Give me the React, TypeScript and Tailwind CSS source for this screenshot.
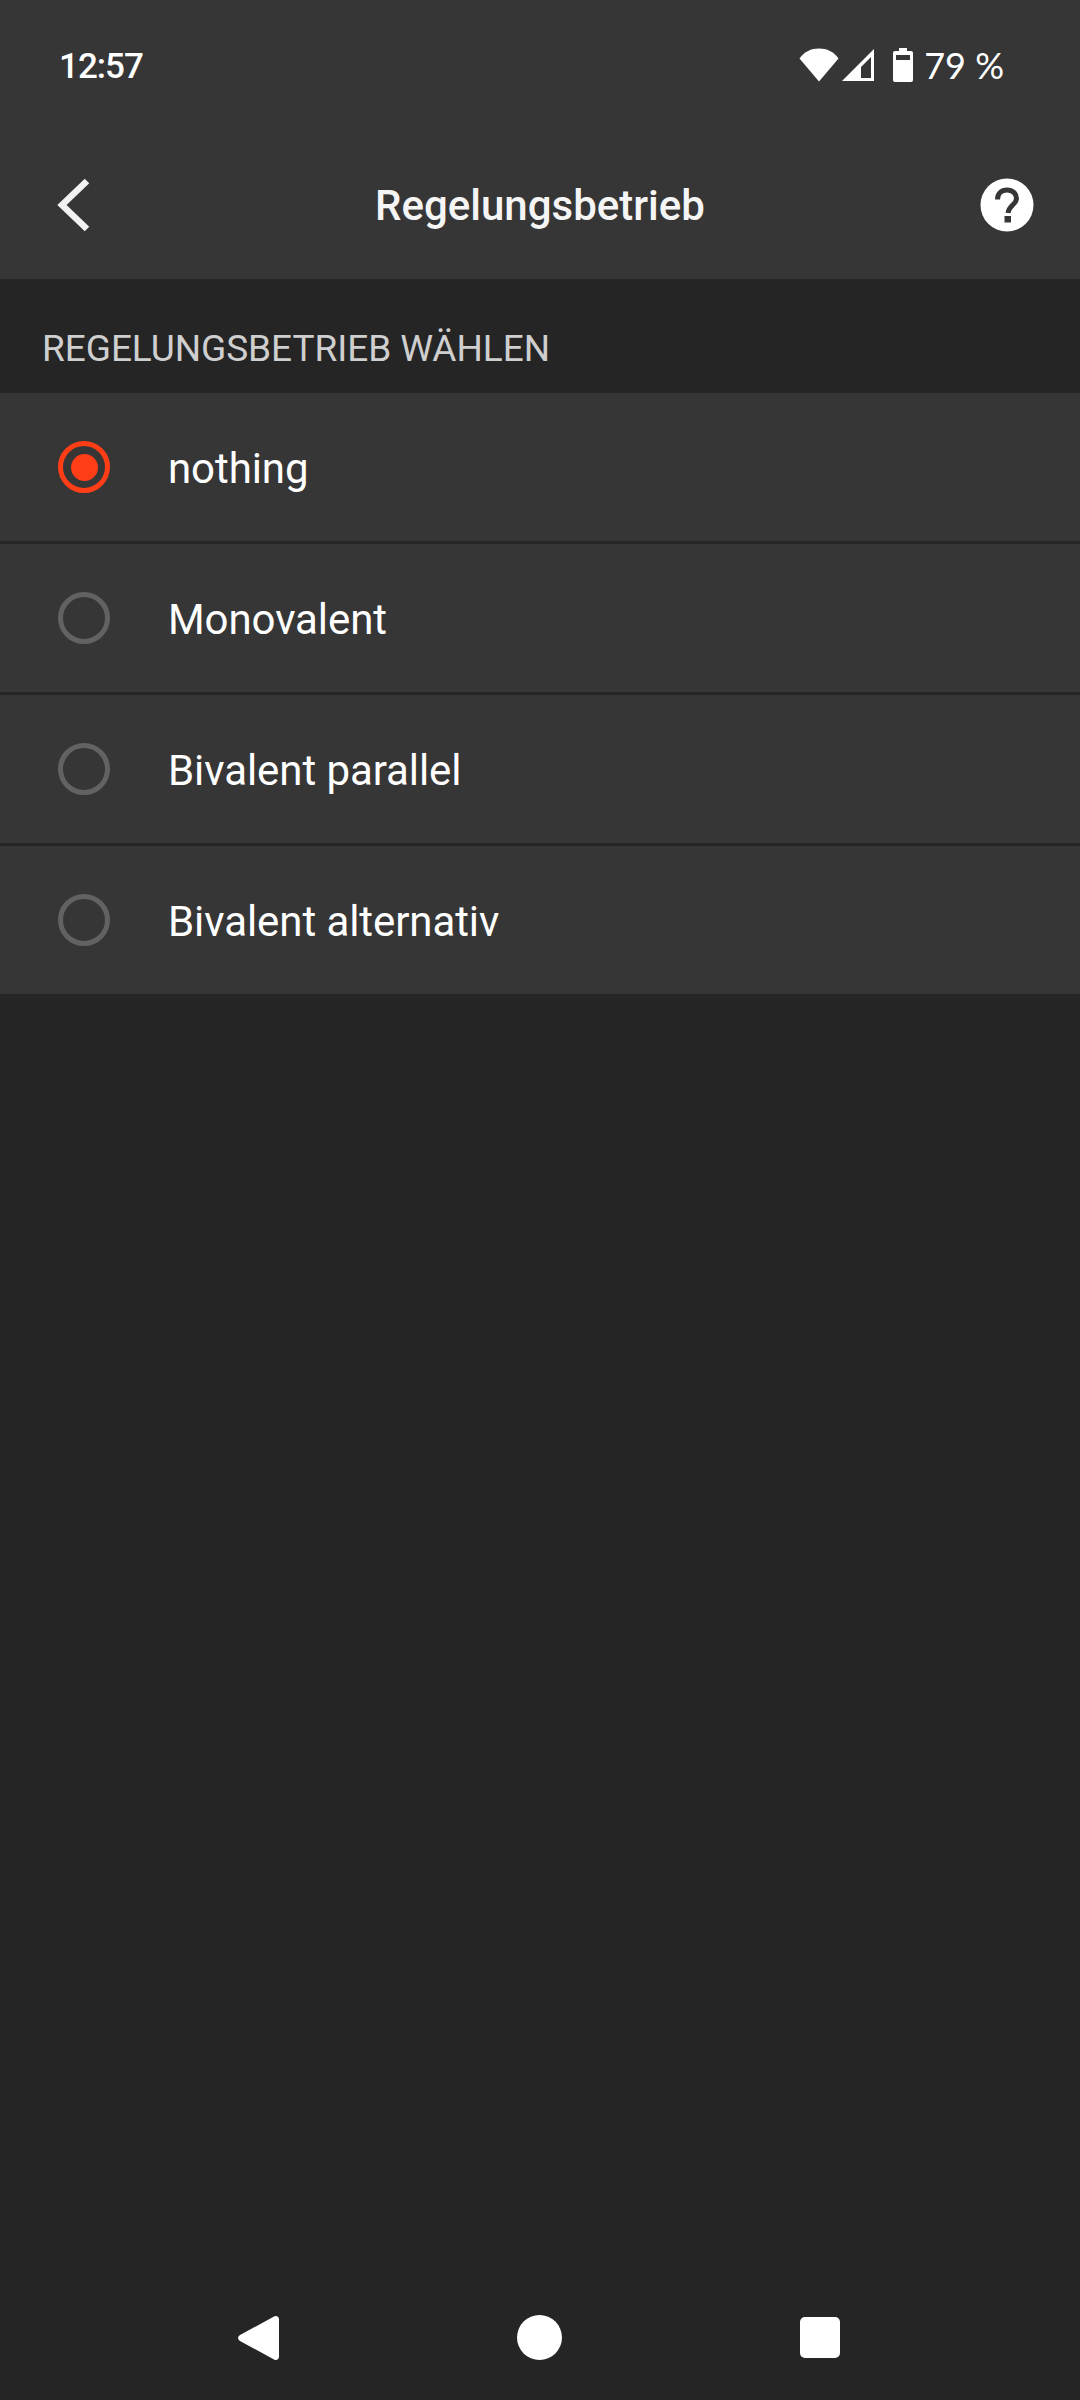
import React from 'react';

const options = ['nothing', 'Monovalent', 'Bivalent parallel', 'Bivalent alternativ'];

function StatusIcons() {
  return (
    <div className="flex items-center">
      {/* wifi */}
      <svg width="40" height="34" viewBox="0 0 40 34" className="block">
        <path d="M0.5 10.5C5.5 3.5 12 0.5 20 0.5C28 0.5 34.5 3.5 39.5 10.5L20 33.5Z" fill="#fff" />
      </svg>
      {/* signal */}
      <svg width="32" height="32" viewBox="0 0 32 32" className="ml-[3px] block">
        <path fillRule="evenodd" d="M32 0V32H0ZM29 8L19 18V29H29Z" fill="#fff" />
      </svg>
      {/* battery */}
      <svg width="20" height="34" viewBox="0 0 20 34" className="ml-[19px] block">
        <path
          fillRule="evenodd"
          d="M6 0H14V3H18C19.2 3 20 3.8 20 5V32C20 33.2 19.2 34 18 34H2C0.8 34 0 33.2 0 32V5C0 3.8 0.8 3 2 3H6ZM3 7V12H17V7Z"
          fill="#fff"
        />
      </svg>
      <span className="ml-[11px] font-['Lato',sans-serif] text-[36px] leading-none text-white">79 %</span>
    </div>
  );
}

function Radio({ selected }: { selected: boolean }) {
  if (selected) {
    return (
      <div className="flex h-[52px] w-[52px] items-center justify-center rounded-full border-[5px] border-[#ff3d17]">
        <div className="h-[27px] w-[27px] rounded-full bg-[#ff3d17]" />
      </div>
    );
  }
  return <div className="h-[52px] w-[52px] rounded-full border-[5px] border-[#626262]" />;
}

export default function App() {
  return (
    <div className="flex h-[2400px] w-full flex-col bg-[#252525] font-['Roboto',sans-serif] text-white">
      <div className="h-[279px] shrink-0 bg-[#363636]">
        <div className="flex h-[130px] items-center justify-between pl-[59px] pr-[76px]">
          <span className="pt-[2px] text-[35px] font-medium leading-none tracking-[-1px]">12:57</span>
          <StatusIcons />
        </div>
        <div className="grid h-[149px] grid-cols-[1fr_auto_1fr] items-center pl-[56px] pr-[46px]">
          <svg width="36" height="54" viewBox="0 0 36 54" className="block">
            <path d="M31 3L6 27L31 51" fill="none" stroke="#f2f2f2" strokeWidth="6.5" />
          </svg>
          <span className="relative left-[-5px] pt-[3px] text-[42px] font-medium leading-none text-[#f5f5f5]">
            Regelungsbetrieb
          </span>
          <svg width="54" height="54" viewBox="0 0 54 54" className="block justify-self-end">
            <circle cx="27" cy="27" r="26.5" fill="#fff" />
            <path
              d="M17.5 21.5C17.5 15.5 21.5 12 27 12C32.5 12 36.5 15.5 36.5 20.5C36.5 26.5 29 27 28 35"
              fill="none"
              stroke="#363636"
              strokeWidth="5"
            />
            <rect x="24.5" y="38" width="6.5" height="6.5" fill="#363636" />
          </svg>
        </div>
      </div>

      <div className="flex h-[114px] shrink-0 items-center pl-[42px] pt-[24px] text-[37px] leading-none tracking-[-0.05px] text-[#cfcfcf]">
        REGELUNGSBETRIEB WÄHLEN
      </div>

      <div className="flex flex-col gap-[3px]">
        {options.map((label, i) => (
          <div key={label} className="flex h-[148px] items-center bg-[#363636] pl-[58px]">
            <Radio selected={i === 0} />
            <span className="ml-[58px] pt-[3px] text-[42px] leading-none tracking-[-0.08px] text-white">{label}</span>
          </div>
        ))}
      </div>

      {/* Android nav bar */}
      <div className="mt-auto flex h-[120px] items-start pl-[238px] pt-[35px]">
        <svg width="42" height="46" viewBox="0 0 42 46" className="block">
          <path
            d="M36 1.5C38.5 0 41 1.5 41 4.5V41.5C41 44.5 38.5 46 36 44.5L2 26C-0.5 24.5 -0.5 21.5 2 20Z"
            fill="#fff"
          />
        </svg>
        <div className="ml-[237px] h-[45px] w-[45px] rounded-full bg-white" />
        <div className="ml-[238px] mt-[2px] h-[41px] w-[40px] rounded-[5px] bg-white" />
      </div>
    </div>
  );
}
